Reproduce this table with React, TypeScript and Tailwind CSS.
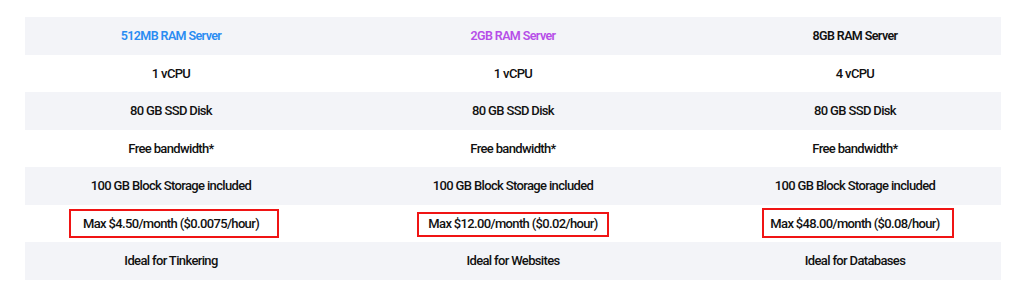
import React from 'react';

type Row = { cells: [string, string, string]; shaded: boolean; h: string };

const rows: Row[] = [
  { cells: ['512MB RAM Server', '2GB RAM Server', '8GB RAM Server'], shaded: true, h: 'h-[38px]' },
  { cells: ['1 vCPU', '1 vCPU', '4 vCPU'], shaded: false, h: 'h-[37px]' },
  { cells: ['80 GB SSD Disk', '80 GB SSD Disk', '80 GB SSD Disk'], shaded: true, h: 'h-[38px]' },
  { cells: ['Free bandwidth*', 'Free bandwidth*', 'Free bandwidth*'], shaded: false, h: 'h-[37px]' },
  {
    cells: ['100 GB Block Storage included', '100 GB Block Storage included', '100 GB Block Storage included'],
    shaded: true,
    h: 'h-[38px]',
  },
  {
    cells: ['Max $4.50/month ($0.0075/hour)', 'Max $12.00/month ($0.02/hour)', 'Max $48.00/month ($0.08/hour)'],
    shaded: false,
    h: 'h-[37px]',
  },
  { cells: ['Ideal for Tinkering', 'Ideal for Websites', 'Ideal for Databases'], shaded: true, h: 'h-[38px]' },
];

const headerColors = ['text-[#2a8cf2]', 'text-[#b64ee8]', 'text-[#111111]'];

// hand-drawn highlight boxes around the price row
const Highlights: React.FC = () => (
  <>
    <div className="absolute left-[44px] top-[4px] w-[210px] h-[29px] border-2 border-[#f01414]" />
    <div className="absolute left-[392px] top-[7px] w-[192px] h-[25px] border-2 border-[#f01414]" />
    <div className="absolute left-[737px] top-[3px] w-[192px] h-[30px] border-2 border-[#f01414]" />
  </>
);

export default function App() {
  return (
    <div
      className="w-[1024px] h-[293px] bg-white pt-[17px] pl-[25px] pr-[23px] text-[13px] text-[#111111]"
      style={{ fontFamily: 'Roboto, "Noto Sans", sans-serif' }}
    >
      {rows.map((row, i) => (
        <div
          key={i}
          className={`relative grid grid-cols-[292px_1fr_292px] items-center text-center ${row.h} ${
            row.shaded ? 'bg-[#f3f4f8]' : 'bg-white'
          }`}
        >
          {row.cells.map((c, j) => (
            <div
              key={j}
              className={
                i === 0
                  ? `text-[12.5px] font-semibold tracking-[-0.6px] ${headerColors[j]}`
                  : 'font-medium tracking-[-0.65px]'
              }
            >
              {c}
            </div>
          ))}
          {i === 5 && <Highlights />}
        </div>
      ))}
    </div>
  );
}
